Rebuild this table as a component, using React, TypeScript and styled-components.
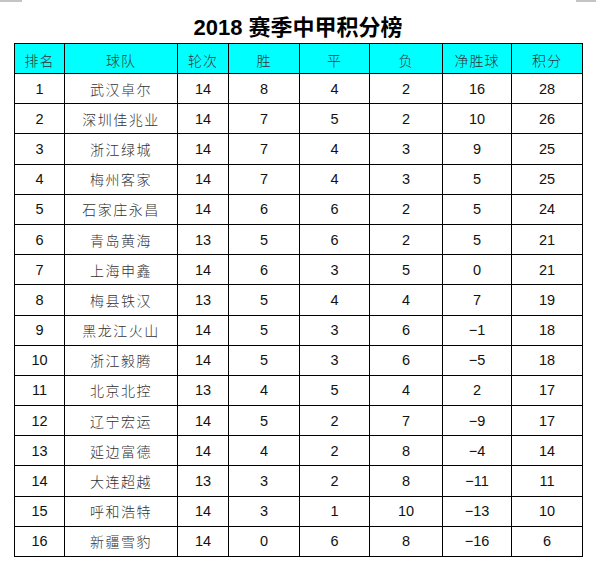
import styled, { createGlobalStyle } from "styled-components";

const GlobalStyle = createGlobalStyle`
    html, body {
        margin: 0;
        padding: 0;
        background: #ffffff;
    }
`;

type Team = {
    rank: number;
    name: string;
    played: number;
    win: number;
    draw: number;
    loss: number;
    diff: number;
    points: number;
};

const teams: Team[] = [
    { rank: 1, name: "武汉卓尔", played: 14, win: 8, draw: 4, loss: 2, diff: 16, points: 28 },
    { rank: 2, name: "深圳佳兆业", played: 14, win: 7, draw: 5, loss: 2, diff: 10, points: 26 },
    { rank: 3, name: "浙江绿城", played: 14, win: 7, draw: 4, loss: 3, diff: 9, points: 25 },
    { rank: 4, name: "梅州客家", played: 14, win: 7, draw: 4, loss: 3, diff: 5, points: 25 },
    { rank: 5, name: "石家庄永昌", played: 14, win: 6, draw: 6, loss: 2, diff: 5, points: 24 },
    { rank: 6, name: "青岛黄海", played: 13, win: 5, draw: 6, loss: 2, diff: 5, points: 21 },
    { rank: 7, name: "上海申鑫", played: 14, win: 6, draw: 3, loss: 5, diff: 0, points: 21 },
    { rank: 8, name: "梅县铁汉", played: 13, win: 5, draw: 4, loss: 4, diff: 7, points: 19 },
    { rank: 9, name: "黑龙江火山", played: 14, win: 5, draw: 3, loss: 6, diff: -1, points: 18 },
    { rank: 10, name: "浙江毅腾", played: 14, win: 5, draw: 3, loss: 6, diff: -5, points: 18 },
    { rank: 11, name: "北京北控", played: 13, win: 4, draw: 5, loss: 4, diff: 2, points: 17 },
    { rank: 12, name: "辽宁宏运", played: 14, win: 5, draw: 2, loss: 7, diff: -9, points: 17 },
    { rank: 13, name: "延边富德", played: 14, win: 4, draw: 2, loss: 8, diff: -4, points: 14 },
    { rank: 14, name: "大连超越", played: 13, win: 3, draw: 2, loss: 8, diff: -11, points: 11 },
    { rank: 15, name: "呼和浩特", played: 14, win: 3, draw: 1, loss: 10, diff: -13, points: 10 },
    { rank: 16, name: "新疆雪豹", played: 14, win: 0, draw: 6, loss: 8, diff: -16, points: 6 },
];

const headers = ["排名", "球队", "轮次", "胜", "平", "负", "净胜球", "积分"];
const widths = [50, 113, 51, 71, 70, 73, 69, 71];

const formatDiff = (n: number) => (n < 0 ? `\u2212${Math.abs(n)}` : `${n}`);

export default function App() {
    return (
        <>
            <GlobalStyle />
            <SPage>
                <SMarks>
                    <SMark $width={22} />
                    <SMark $width={20} />
                </SMarks>
                <STitle>2018 赛季中甲积分榜</STitle>
                <STable>
                    <colgroup>
                        {widths.map((w, i) => (
                            <col key={i} style={{ width: w }} />
                        ))}
                    </colgroup>
                    <thead>
                        <SHeadRow>
                            {headers.map((h) => (
                                <SHeadCell key={h}>{h}</SHeadCell>
                            ))}
                        </SHeadRow>
                    </thead>
                    <tbody>
                        {teams.map((t) => (
                            <SRow key={t.rank}>
                                <SNumCell>{t.rank}</SNumCell>
                                <SNameCell>{t.name}</SNameCell>
                                <SNumCell>{t.played}</SNumCell>
                                <SNumCell>{t.win}</SNumCell>
                                <SNumCell>{t.draw}</SNumCell>
                                <SNumCell>{t.loss}</SNumCell>
                                <SNumCell>{formatDiff(t.diff)}</SNumCell>
                                <SNumCell>{t.points}</SNumCell>
                            </SRow>
                        ))}
                    </tbody>
                </STable>
            </SPage>
        </>
    );
}

const SPage = styled.div`
    width: 596px;
    height: 576px;
    display: flex;
    flex-direction: column;
    background: #ffffff;
`;

const SMarks = styled.div`
    display: flex;
    justify-content: space-between;
    height: 2px;
`;

const SMark = styled.div<{ $width: number }>`
    width: ${(p) => p.$width}px;
    height: 2px;
    background: #c4c4c4;
`;

const STitle = styled.div`
    height: 36px;
    padding-top: 5px;
    display: flex;
    align-items: center;
    justify-content: center;
    font-family: "Liberation Sans", "Noto Sans CJK SC", sans-serif;
    font-weight: bold;
    font-size: 22px;
    color: #000000;
`;

const STable = styled.table`
    margin-left: 14px;
    width: 569px;
    table-layout: fixed;
    border-collapse: collapse;
    border: 1px solid #000000;
`;

const SHeadRow = styled.tr`
    height: 30px;
`;

const SHeadCell = styled.th`
    padding: 3px 0 0;
    border: 1px solid #000000;
    background: #00ffff;
    font-family: "Noto Sans CJK SC", sans-serif;
    font-weight: 300;
    font-size: 14px;
    letter-spacing: 1px;
    color: #333333;
    text-align: center;
`;

const SRow = styled.tr`
    height: 30.2px;
`;

const SNumCell = styled.td`
    padding: 1px 0 0;
    border: 1px solid #000000;
    font-family: "Liberation Sans", Arial, sans-serif;
    font-size: 14.5px;
    line-height: 17px;
    color: #111111;
    text-align: center;
    vertical-align: middle;
`;

const SNameCell = styled(SNumCell)`
    font-family: "Noto Sans CJK SC", sans-serif;
    font-weight: 300;
    font-size: 14px;
    letter-spacing: 1.5px;
    color: #333333;
`;
